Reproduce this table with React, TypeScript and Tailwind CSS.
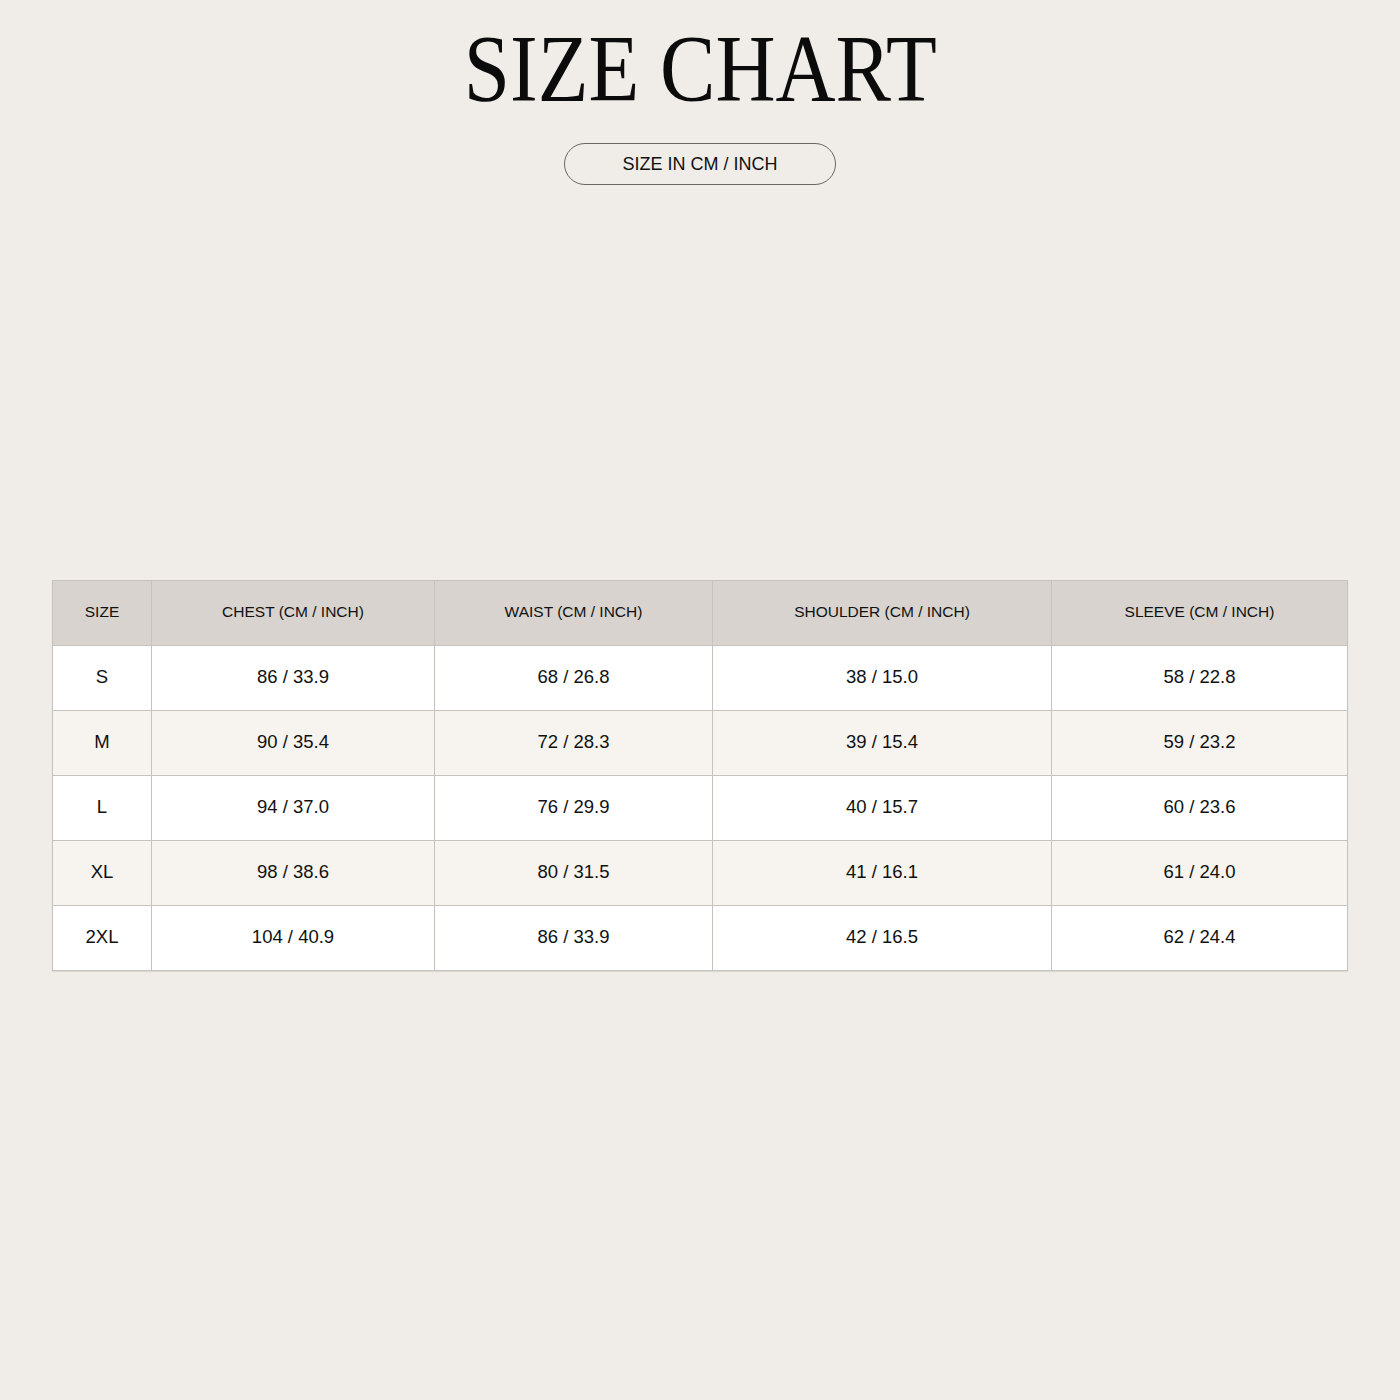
const headers = [
  "SIZE",
  "CHEST (CM / INCH)",
  "WAIST (CM / INCH)",
  "SHOULDER (CM / INCH)",
  "SLEEVE (CM / INCH)",
];

const rows = [
  ["S", "86 / 33.9", "68 / 26.8", "38 / 15.0", "58 / 22.8"],
  ["M", "90 / 35.4", "72 / 28.3", "39 / 15.4", "59 / 23.2"],
  ["L", "94 / 37.0", "76 / 29.9", "40 / 15.7", "60 / 23.6"],
  ["XL", "98 / 38.6", "80 / 31.5", "41 / 16.1", "61 / 24.0"],
  ["2XL", "104 / 40.9", "86 / 33.9", "42 / 16.5", "62 / 24.4"],
];

export default function App() {
  return (
    <div className="min-h-[1400px] w-full bg-[#f0ede8] flex flex-col items-center text-[#111] font-['Liberation_Sans',Arial,sans-serif]">
      <h1 className="pt-[22px] text-[95px] leading-none scale-x-[0.875] font-['Liberation_Serif','Times_New_Roman',serif] text-[#0b0b0b]">
        SIZE CHART
      </h1>

      <div className="mt-[26px] w-[272px] h-[42px] rounded-full border border-[#6b6965] flex items-center justify-center text-[18px]">
        SIZE IN CM / INCH
      </div>

      <div className="mt-[395px] w-full px-[52px]">
        <div className="grid grid-cols-[98px_282px_277px_338px_295px] gap-px p-px bg-[#c6c2bd] shadow-[0_1px_1px_rgba(0,0,0,0.08)]">
          {headers.map((h) => (
            <div
              key={h}
              className="h-[64px] pb-[2px] bg-[#d8d3ce] flex items-center justify-center text-[15.5px]"
            >
              {h}
            </div>
          ))}
          {rows.map((r, i) =>
            r.map((c, j) => (
              <div
                key={`${i}-${j}`}
                className={`h-[64px] pb-[2px] flex items-center justify-center text-[18.5px] ${
                  i % 2 === 1 ? "bg-[#f7f4ef]" : "bg-white"
                }`}
              >
                {c}
              </div>
            ))
          )}
        </div>
      </div>
    </div>
  );
}
